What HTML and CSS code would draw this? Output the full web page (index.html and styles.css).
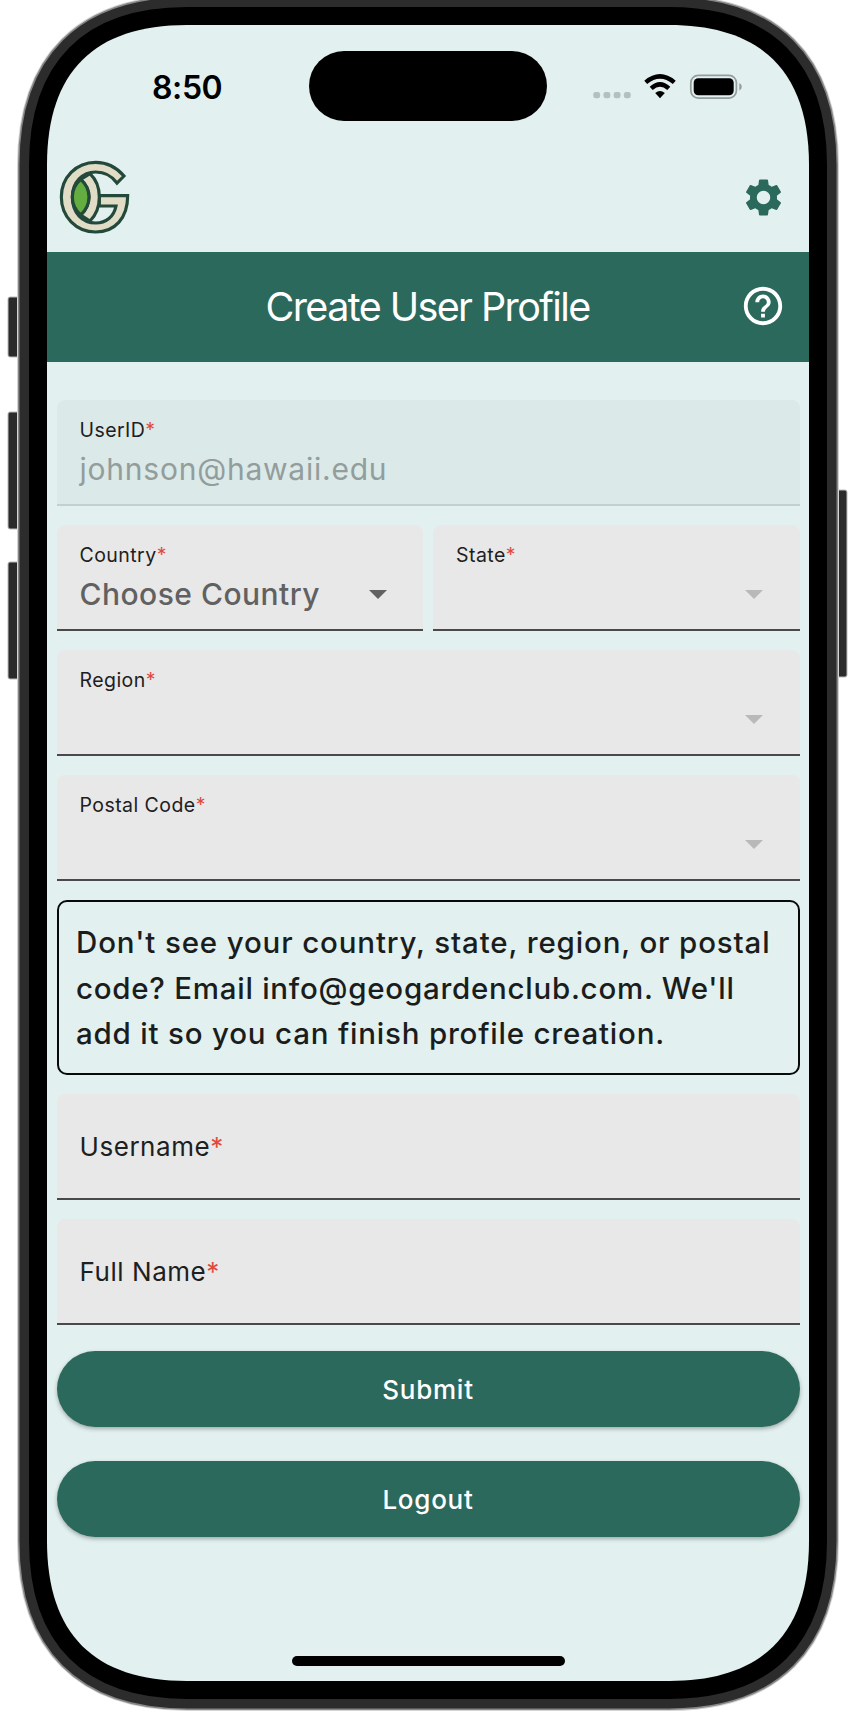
FILE: index.html
```html
<!DOCTYPE html>
<html lang="en">
<head>
<meta charset="utf-8">
<title>Create User Profile</title>
<link rel="stylesheet" href="styles.css">
</head>
<body>
<div class="device">
  <svg class="frame" width="860" height="1714" viewBox="0 0 860 1714" aria-hidden="true">
    <defs>
      <path id="shell" d="M187 25H669C762 25 809 72 809 165V1541C809 1634 762 1681 669 1681H187C94 1681 47 1634 47 1541V165C47 72 94 25 187 25Z"/>
    </defs>
    <g fill="#2b2b2b" stroke="#bdbdbd">
      <rect x="8" y="297" width="16" height="60" rx="2"/>
      <rect x="8" y="412" width="16" height="117" rx="2"/>
      <rect x="8" y="562" width="16" height="117" rx="2"/>
      <rect x="832" y="490" width="15" height="187" rx="2"/>
    </g>
    <use href="#shell" fill="none" stroke="#d4d4d4" stroke-width="60"/>
    <use href="#shell" fill="none" stroke="#858585" stroke-width="58"/>
    <use href="#shell" fill="none" stroke="#2c2c2c" stroke-width="55"/>
    <use href="#shell" fill="#e2f1f0" stroke="#000" stroke-width="36"/>
    <use href="#shell" fill="#e2f1f0"/>
  </svg>
  <main class="screen">
    <div class="status">
      <span class="time">8:50</span>
      <span class="island"></span>
      <svg class="signals" width="150" height="26" viewBox="0 0 150 26">
        <g fill="#b3c0bf"><rect x="0.300" y="18" width="6.800" height="6.300" rx="2.200"/><rect x="10.500" y="18" width="6.800" height="6.300" rx="2.200"/><rect x="20.700" y="18" width="6.800" height="6.300" rx="2.200"/><rect x="30.900" y="18" width="6.800" height="6.300" rx="2.200"/></g>
        <g fill="none" stroke="#000" stroke-width="4.500"><path d="M52.700 8.400Q67 -3.600 81.300 8.400"/><path d="M58.200 14.400Q67 6.400 75.800 14.400"/></g>
        <path d="M62.200 19Q67 15 71.800 19L67 24.300Z"/>
        <rect x="97.800" y="1.300" width="45.600" height="22.800" rx="7.500" fill="none" stroke="#929d9c" stroke-width="1.700"/>
        <rect x="100.700" y="4.200" width="40" height="17" rx="4.500"/>
        <path d="M146.300 9Q148.800 10 148.800 12.700Q148.800 15.500 146.300 16.500Z" fill="#929d9c"/>
      </svg>
    </div>
    <div class="topbar">
      <svg class="logo" width="90" height="90" viewBox="0 0 270 270">
        <g fill="#e1dcc6" stroke="#23493a" stroke-width="9.500" stroke-linejoin="miter">
          <path d="M222 78C200 52 172 37 137 37C78 37 34 83 34 141C34 200 78 246 137 246C194 246 233 205 233 137H148V168H198C192 200 168 219 137 219C98 219 67 190 67 141C67 96 98 66 137 66C164 66 185 77 201 99Z"/>
          <path d="M92 88L120 71Q148 98 148 141Q148 185 120 213L92 195Q117 172 117 141Q117 110 92 88Z"/>
          <path d="M92 88Q67 110 67 141Q67 172 92 195Q117 172 117 141Q117 110 92 88Z" fill="#64ae41"/>
        </g>
      </svg>
      <svg class="gear" width="45" height="45" viewBox="0 0 24 24"><path fill="#2c695d" d="M19.140 12.940c.040-.300.060-.610.060-.940 0-.320-.020-.640-.070-.940l2.030-1.580a.490.490 0 0 0 .120-.610l-1.920-3.320a.488.488 0 0 0-.590-.220l-2.390.960c-.500-.380-1.030-.700-1.620-.940l-.360-2.540a.484.484 0 0 0-.480-.410h-3.840c-.240 0-.430.170-.470.410l-.360 2.540c-.590.240-1.130.570-1.620.940l-2.390-.960c-.220-.080-.470 0-.590.220L2.740 8.870c-.120.210-.080.470.120.610l2.030 1.580c-.050.300-.090.630-.090.940s.020.640.070.940l-2.030 1.580a.490.490 0 0 0-.120.610l1.920 3.320c.120.220.370.290.590.220l2.390-.960c.500.380 1.030.700 1.620.940l.360 2.540c.050.240.240.410.480.410h3.840c.240 0 .440-.170.470-.410l.360-2.540c.590-.240 1.130-.560 1.620-.940l2.390.960c.220.080.470 0 .590-.220l1.920-3.320c.120-.220.070-.470-.120-.610zM12 15.600A3.600 3.600 0 1 1 12 8.400a3.600 3.600 0 0 1 0 7.200z"/></svg>
    </div>
    <header class="title">
      <h1>Create User Profile</h1>
      <svg class="help" width="46" height="46" viewBox="0 0 24 24"><path fill="#fff" d="M11 18h2v-2h-2v2zm1-16C6.480 2 2 6.480 2 12s4.480 10 10 10 10-4.480 10-10S17.520 2 12 2zm0 18c-4.410 0-8-3.590-8-8s3.590-8 8-8 8 3.590 8 8-3.590 8-8 8zm0-14c-2.210 0-4 1.790-4 4h2c0-1.100.900-2 2-2s2 .900 2 2c0 2-3 1.750-3 5h2c0-2.250 3-2.500 3-5 0-2.210-1.790-4-4-4z"/></svg>
    </header>
    <form class="form">
      <div class="field disabled"><label>UserID<b>*</b></label><div class="value">johnson@hawaii.edu</div></div>
      <div class="row">
        <div class="field"><label>Country<b>*</b></label><div class="value choose">Choose Country</div><i class="caret active"></i></div>
        <div class="field"><label>State<b>*</b></label><i class="caret"></i></div>
      </div>
      <div class="field"><label>Region<b>*</b></label><i class="caret"></i></div>
      <div class="field"><label>Postal Code<b>*</b></label><i class="caret"></i></div>
      <p class="note"><span class="l1">Don't see your country, state, region, or postal</span><br><span class="l2">code? Email info@geogardenclub.com. We'll</span><br><span class="l3">add it so you can finish profile creation.</span></p>
      <div class="field empty"><label>Username<b>*</b></label></div>
      <div class="field empty"><label>Full Name<b>*</b></label></div>
      <button type="button" class="submit">Submit</button>
      <button type="button" class="logout">Logout</button>
    </form>
    <div class="home"></div>
  </main>
</div>
</body>
</html>
```
FILE: styles.css
```css
* { box-sizing: border-box; }
body { margin: 0; background: #fff; font-family: Inter, "Liberation Sans", sans-serif; overflow: hidden; }
.device { display: grid; width: 860px; height: 1714px; }
.frame { grid-area: 1 / 1; display: block; }
.screen { grid-area: 1 / 1; z-index: 1; width: 762px; height: 1656px; margin: 25px 0 0 47px; display: flex; flex-direction: column; }
.status { height: 125px; display: flex; align-items: flex-start; }
.time { width: 262px; padding: 42px 0 0 105px; font-size: 32px; font-weight: 600; line-height: 42px; letter-spacing: -.4px; }
.island { width: 238px; height: 70px; margin-top: 26px; border-radius: 35px; background: #000; }
.signals { margin: 49px 0 0 46px; }
.topbar { height: 102px; display: flex; justify-content: space-between; align-items: flex-start; padding: 0 23px 0 3px; }
.gear { margin-top: 25px; }
.title { height: 110px; background: #2c695d; display: flex; align-items: center; justify-content: flex-end; padding-right: 23px; }
.title h1 { flex: 1; margin: 0 0 0 218.500px; color: #fff; font-size: 39.500px; font-weight: 400; line-height: 48px; letter-spacing: -1.600px; white-space: nowrap; }
.help { margin-top: -3px; }
.form { padding: 38px 9.500px 0; display: flex; flex-direction: column; gap: 19px; }
.row { display: grid; grid-template-columns: 1fr 1fr; gap: 10px; }
.field { position: relative; height: 106px; padding: 18px 23px 0; background: #e8e8e8; border-bottom: 2px solid #4a484b; border-radius: 8px 8px 0 0; color: #1d2020; }
.field label { display: block; font-size: 19.500px; line-height: 25px; letter-spacing: .45px; }
.field b { font-weight: 400; color: #e2483d; }
.value { margin-top: 7px; font-size: 30px; line-height: 38px; letter-spacing: .77px; white-space: nowrap; }
.disabled { background: #dbe9e8; border-bottom-color: #c3d0cf; }
.disabled .value { color: #929d9c; }
.choose { color: #616161; font-weight: 500; letter-spacing: .48px; }
.caret { position: absolute; right: 37px; top: 65px; border: 9px solid transparent; border-top-color: #b9b9b9; border-bottom: 0; }
.caret.active { right: 36px; border-top-color: #616161; }
.empty { padding-top: 36px; }
.empty label { font-size: 26px; line-height: 34px; letter-spacing: .55px; }
.note { height: 175px; margin: 0; padding: 18px 17.500px; border: 2px solid #080a0a; border-radius: 10px; font-size: 29.500px; font-weight: 500; line-height: 45.500px; letter-spacing: .8px; color: #1b1d1d; white-space: nowrap; }
.l1 { letter-spacing: .85px; }
.l2 { letter-spacing: .74px; }
button { height: 76px; padding: 2px 0 0; border: 0; border-radius: 38px; background: #2c695d; color: #fff; font: 500 26px/34px Inter, sans-serif; letter-spacing: .75px; box-shadow: 0 2px 4px rgba(0,0,0,.3); }
.submit { margin-top: 7px; }
.logout { margin-top: 15px; }
.home { width: 273px; height: 10px; margin: auto auto 15px; border-radius: 5px; background: #000; }
```
